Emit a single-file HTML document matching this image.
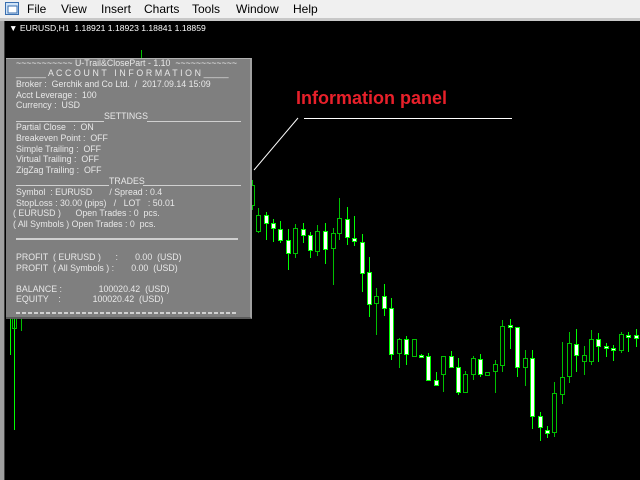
<!DOCTYPE html>
<html><head><meta charset="utf-8"><style>
*{margin:0;padding:0;box-sizing:border-box}
body{width:640px;height:480px;overflow:hidden;background:#000;position:relative;font-family:"Liberation Sans",sans-serif}
#menu{position:absolute;left:0;top:0;width:640px;height:18px;background:#f0f0f0;font-size:12px;color:#000}
#menu span{position:absolute;top:2px}
#strip{position:absolute;left:0;top:18px;width:640px;height:3px;background:#c8c8c8}
#lb{position:absolute;left:0;top:21px;width:5px;height:459px;background:#a0a0a0;border-right:1px solid #404040}
#title{position:absolute;left:9px;top:23px;font-size:8.6px;color:#fff;white-space:pre}
#panel{position:absolute;left:6px;top:58px;width:246px;height:261px;background:#7f7f7f;border-top:1px solid #b0b0b0;border-right:2px solid #a0a0a0;border-bottom:2px solid #5a5a5a;overflow:hidden}
.t{position:absolute;font-size:8.8px;line-height:11px;color:#e8e8e8;white-space:pre}
.hl{position:absolute;height:2px;background:#d0d0d0}
#lbl{position:absolute;left:296px;top:88px;font-size:18px;font-weight:bold;color:#e8202a}
</style></head><body>
<div id="menu">
<svg style="position:absolute;left:5px;top:2px" width="14" height="13"><rect x="0.5" y="0.5" width="13" height="12" fill="#cfe3f7" stroke="#3a6fb0"/><rect x="3" y="4" width="9" height="7" fill="#fff" stroke="#3a6fb0"/></svg>
<span style="left:27px">File</span><span style="left:61px">View</span><span style="left:101px">Insert</span><span style="left:144px">Charts</span><span style="left:192px">Tools</span><span style="left:236px">Window</span><span style="left:293px">Help</span>
</div>
<div id="strip"></div>
<div id="lb"></div>
<div id="title">▼ EURUSD,H1  1.18921 1.18923 1.18841 1.18859</div>

<svg style="position:absolute;left:0;top:0" width="640" height="480" shape-rendering="crispEdges">
<g id="c"></g>
<line x1="141.5" y1="50" x2="141.5" y2="59" stroke="#00c000"/>
<line x1="10.5" y1="318" x2="10.5" y2="355" stroke="#00ff00"/>
<line x1="14.5" y1="318" x2="14.5" y2="430" stroke="#00ff00"/>
<rect x="12.5" y="318.5" width="4" height="10" fill="none" stroke="#00c000"/>
<line x1="21.5" y1="318" x2="21.5" y2="331" stroke="#00c000"/>
<line x1="298" y1="118" x2="254" y2="170" stroke="#fff" shape-rendering="auto"/>
<line x1="304" y1="118.5" x2="512" y2="118.5" stroke="#fff"/>
</svg>

<div id="lbl">Information panel</div>

<div id="panel">
<div class="t" style="left:10px;top:-1px">~~~~~~~~~~~ U-Trail&amp;ClosePart - 1.10  ~~~~~~~~~~~~</div>
<div class="t" style="left:10px;top:9px;letter-spacing:0.1px">______ A C C O U N T   I N F O R M A T I O N _____</div>
<div class="t" style="left:10px;top:20px">Broker :  Gerchik and Co Ltd.  /  2017.09.14 15:09</div>
<div class="t" style="left:10px;top:31px">Acct Leverage :  100</div>
<div class="t" style="left:10px;top:41px">Currency :  USD</div>
<div class="hl" style="left:10px;top:62px;width:88px;height:1px"></div>
<div class="t" style="left:98px;top:52px">SETTINGS</div>
<div class="hl" style="left:141px;top:62px;width:94px;height:1px"></div>
<div class="t" style="left:10px;top:63px">Partial Close   :  ON</div>
<div class="t" style="left:10px;top:74px">Breakeven Point :  OFF</div>
<div class="t" style="left:10px;top:85px">Simple Trailing :  OFF</div>
<div class="t" style="left:10px;top:95px">Virtual Trailing :  OFF</div>
<div class="t" style="left:10px;top:106px">ZigZag Trailing :  OFF</div>
<div class="hl" style="left:10px;top:126px;width:93px;height:1px"></div>
<div class="t" style="left:103px;top:117px">TRADES</div>
<div class="hl" style="left:137px;top:126px;width:98px;height:1px"></div>
<div class="t" style="left:10px;top:128px">Symbol  : EURUSD       / Spread : 0.4</div>
<div class="t" style="left:10px;top:139px">StopLoss : 30.00 (pips)   /   LOT   : 50.01</div>
<div class="t" style="left:7px;top:149px">( EURUSD )      Open Trades : 0  pcs.</div>
<div class="t" style="left:7px;top:160px">( All Symbols ) Open Trades : 0  pcs.</div>
<div class="hl" style="left:10px;top:179px;width:222px"></div>
<div class="t" style="left:10px;top:193px">PROFIT  ( EURUSD )      :       0.00  (USD)</div>
<div class="t" style="left:10px;top:204px">PROFIT  ( All Symbols ) :       0.00  (USD)</div>
<div class="t" style="left:10px;top:225px">BALANCE :               100020.42  (USD)</div>
<div class="t" style="left:10px;top:235px">EQUITY    :             100020.42  (USD)</div>
<div class="hl" style="left:10px;top:253px;width:220px;background:repeating-linear-gradient(90deg,#d0d0d0 0 4px,transparent 4px 6px)"></div>
</div>

<script>
var C=[[258,208,233,215,231,0],[266,212,240,215,223,1],[273,219,242,223,228,1],[280,221,243,229,240,1],[288,229,270,240,253,1],[295,224,258,228,253,0],[303,223,243,229,235,1],[310,232,258,235,250,1],[317,225,256,231,251,0],[325,223,264,231,249,1],[333,228,285,233,248,0],[339,198,240,218,233,0],[347,207,245,219,237,1],[354,216,246,238,241,1],[362,234,292,242,273,1],[369,257,317,272,304,1],[376,288,335,296,303,0],[384,284,316,296,308,1],[391,298,360,308,354,1],[399,338,368,339,353,0],[406,336,365,339,354,1],[414,339,355,339,356,0],[421,354,358,355,357,1],[428,353,380,356,380,1],[436,372,384,380,385,1],[443,356,392,356,374,0],[451,351,368,356,367,1],[458,358,395,367,392,1],[465,371,393,374,392,0],[473,356,380,358,374,0],[480,354,377,359,374,1],[487,372,376,372,375,0],[495,360,393,364,371,0],[502,320,372,326,365,0],[510,319,349,325,327,1],[517,327,377,327,367,1],[525,350,386,358,367,0],[532,350,429,358,416,1],[540,412,441,416,427,1],[547,426,438,430,433,1],[554,382,437,393,432,0],[562,342,404,377,394,0],[569,332,383,343,376,0],[576,329,372,344,355,1],[584,346,375,355,361,0],[591,330,365,339,361,0],[598,333,362,339,346,1],[606,343,357,346,348,1],[613,345,361,348,350,1],[621,332,353,334,350,0],[628,332,352,335,337,1],[636,329,347,335,338,1],[252,180,210,185,205,0]];
var s='';C.forEach(function(c){var x=c[0],col=c[5]?'#00ff00':'#00c000';s+='<line x1="'+(x+.5)+'" y1="'+c[1]+'" x2="'+(x+.5)+'" y2="'+c[2]+'" stroke="'+col+'"/>';s+='<rect x="'+(x-1.5)+'" y="'+(c[3]+.5)+'" width="4" height="'+Math.max(1,c[4]-c[3])+'" fill="'+(c[5]?'#fff':'#000')+'" stroke="'+col+'"/>';});
document.getElementById('c').innerHTML=s;
</script>
</body></html>
